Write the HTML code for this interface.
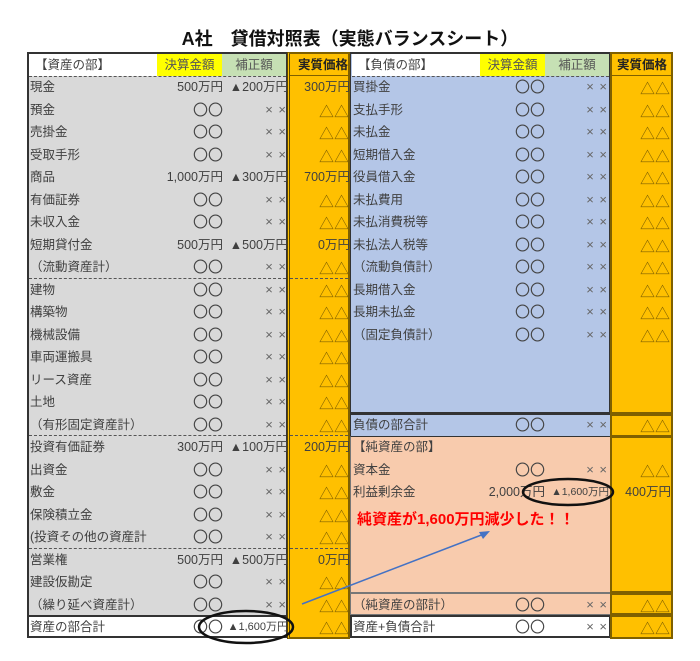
<!DOCTYPE html>
<html><head><meta charset="utf-8">
<style>
*{margin:0;padding:0;box-sizing:border-box}
body{width:700px;height:661px;background:#fff;position:relative;overflow:hidden;font-family:"Liberation Sans","Noto Sans CJK JP",sans-serif;color:#404040;font-size:12.5px}
.a{position:absolute}
.r{position:absolute;height:22px;line-height:22px;display:flex;white-space:nowrap}
.r span{display:block;overflow:visible}
.n{text-align:left;padding-left:2px}
.k,.h,.j{text-align:right}
.L .n{width:129px}.L .k{width:66px}.L .h{width:65px}
.R .n{width:130px}.R .k{width:64px}.R .h{width:64px}
.x{color:#666;font-size:13px;padding-right:2px;word-spacing:2px}
.t{color:#7f6000;font-size:15px;padding-right:1px;position:relative;top:3px}
.o{color:#444;font-size:15px;position:relative;top:1px}
.dash{position:absolute;height:0;border-top:1.5px dashed #555}
</style></head><body>
<div class="a" style="left:0;top:25px;width:700px;text-align:center;font-size:18px;font-weight:bold;color:#111">A社　貸借対照表（実態バランスシート）</div>

<div class="a" style="left:27px;top:52px;width:261px;height:564px;background:#d9d9d9;border:2px solid #333;border-bottom:none"></div>
<div class="a" style="left:29px;top:54px;width:128px;height:22px;background:#fff"></div>
<div class="a" style="left:157px;top:54px;width:65px;height:22px;background:#ffff00"></div>
<div class="a" style="left:222px;top:54px;width:64px;height:22px;background:#c6e0b4"></div>
<div class="a" style="left:27px;top:615px;width:261px;height:23px;background:#fff;border:2px solid #333"></div>
<div class="dash" style="left:29px;top:76px;width:257px"></div>
<div class="dash" style="left:29px;top:278px;width:257px"></div>
<div class="dash" style="left:29px;top:435px;width:257px"></div>
<div class="dash" style="left:29px;top:548px;width:257px"></div>

<div class="a" style="left:287px;top:52px;width:63px;height:587px;background:#ffc000;border:2px solid #7f6000;border-left:3px double #5a4500"></div>
<div class="a" style="left:290px;top:75px;width:58px;height:1px;background:#7f6000"></div>
<div class="dash" style="left:290px;top:278px;width:58px"></div>
<div class="dash" style="left:290px;top:435px;width:58px"></div>
<div class="dash" style="left:290px;top:548px;width:58px"></div>

<div class="a" style="left:350px;top:52px;width:261px;height:362px;background:#b4c6e7;border:2px solid #333;border-left:1px solid #333"></div>
<div class="a" style="left:352px;top:54px;width:128px;height:22px;background:#fff"></div>
<div class="a" style="left:480px;top:54px;width:65px;height:22px;background:#ffff00"></div>
<div class="a" style="left:545px;top:54px;width:64px;height:22px;background:#c6e0b4"></div>
<div class="dash" style="left:352px;top:76px;width:257px"></div>
<div class="a" style="left:350px;top:414px;width:261px;height:23px;background:#b4c6e7;border:1.5px solid #333;border-bottom:none"></div>
<div class="a" style="left:350px;top:436px;width:261px;height:157px;background:#f8cbad;border:1px solid #777;border-top:1px solid #333"></div>
<div class="a" style="left:350px;top:593px;width:261px;height:22px;background:#f8cbad;border:1px solid #777"></div>
<div class="a" style="left:350px;top:615px;width:261px;height:23px;background:#fff;border:2px solid #333"></div>

<div class="a" style="left:610px;top:52px;width:63px;height:362px;background:#ffc000;border:2px solid #7f6000"></div>
<div class="a" style="left:612px;top:75px;width:59px;height:1px;background:#7f6000"></div>
<div class="a" style="left:610px;top:414px;width:63px;height:23px;background:#ffc000;border:2px solid #7f6000"></div>
<div class="a" style="left:610px;top:436px;width:63px;height:157px;background:#ffc000;border:2px solid #7f6000"></div>
<div class="a" style="left:610px;top:593px;width:63px;height:22px;background:#ffc000;border:2px solid #7f6000"></div>
<div class="a" style="left:610px;top:615px;width:63px;height:24px;background:#ffc000;border:2px solid #7f6000"></div>

<div class="r" style="left:29px;top:54px"><span style="width:128px;padding-left:6px">【資産の部】</span><span style="width:65px;text-align:center;color:#555">決算金額</span><span style="width:64px;text-align:center;color:#555">補正額</span><span style="width:8px"></span><span style="width:58px;text-align:center;font-weight:bold;color:#222">実質価格</span></div>
<div class="r" style="left:352px;top:54px"><span style="width:128px;padding-left:6px">【負債の部】</span><span style="width:65px;text-align:center;color:#555">決算金額</span><span style="width:64px;text-align:center;color:#555">補正額</span><span style="width:4px"></span><span style="width:58px;text-align:center;font-weight:bold;color:#222">実質価格</span></div>

<div class="L">
<div class="r" style="left:28px;top:76px"><span class="n">現金</span><span class="k">500万円</span><span class="h">▲200万円</span><span class="j" style="width:62px">300万円</span></div>
<div class="r" style="left:28px;top:98.5px"><span class="n">預金</span><span class="k o">〇〇</span><span class="h x">× ×</span><span class="j t" style="width:62px">△△</span></div>
<div class="r" style="left:28px;top:121px"><span class="n">売掛金</span><span class="k o">〇〇</span><span class="h x">× ×</span><span class="j t" style="width:62px">△△</span></div>
<div class="r" style="left:28px;top:143.5px"><span class="n">受取手形</span><span class="k o">〇〇</span><span class="h x">× ×</span><span class="j t" style="width:62px">△△</span></div>
<div class="r" style="left:28px;top:166px"><span class="n">商品</span><span class="k">1,000万円</span><span class="h">▲300万円</span><span class="j" style="width:62px">700万円</span></div>
<div class="r" style="left:28px;top:188.5px"><span class="n">有価証券</span><span class="k o">〇〇</span><span class="h x">× ×</span><span class="j t" style="width:62px">△△</span></div>
<div class="r" style="left:28px;top:211px"><span class="n">未収入金</span><span class="k o">〇〇</span><span class="h x">× ×</span><span class="j t" style="width:62px">△△</span></div>
<div class="r" style="left:28px;top:233.5px"><span class="n">短期貸付金</span><span class="k">500万円</span><span class="h">▲500万円</span><span class="j" style="width:62px">0万円</span></div>
<div class="r" style="left:28px;top:256px"><span class="n">（流動資産計）</span><span class="k o">〇〇</span><span class="h x">× ×</span><span class="j t" style="width:62px">△△</span></div>
<div class="r" style="left:28px;top:278.5px"><span class="n">建物</span><span class="k o">〇〇</span><span class="h x">× ×</span><span class="j t" style="width:62px">△△</span></div>
<div class="r" style="left:28px;top:301px"><span class="n">構築物</span><span class="k o">〇〇</span><span class="h x">× ×</span><span class="j t" style="width:62px">△△</span></div>
<div class="r" style="left:28px;top:323.5px"><span class="n">機械設備</span><span class="k o">〇〇</span><span class="h x">× ×</span><span class="j t" style="width:62px">△△</span></div>
<div class="r" style="left:28px;top:346px"><span class="n">車両運搬具</span><span class="k o">〇〇</span><span class="h x">× ×</span><span class="j t" style="width:62px">△△</span></div>
<div class="r" style="left:28px;top:368.5px"><span class="n">リース資産</span><span class="k o">〇〇</span><span class="h x">× ×</span><span class="j t" style="width:62px">△△</span></div>
<div class="r" style="left:28px;top:391px"><span class="n">土地</span><span class="k o">〇〇</span><span class="h x">× ×</span><span class="j t" style="width:62px">△△</span></div>
<div class="r" style="left:28px;top:413.5px"><span class="n">（有形固定資産計）</span><span class="k o">〇〇</span><span class="h x">× ×</span><span class="j t" style="width:62px">△△</span></div>
<div class="r" style="left:28px;top:436px"><span class="n">投資有価証券</span><span class="k">300万円</span><span class="h">▲100万円</span><span class="j" style="width:62px">200万円</span></div>
<div class="r" style="left:28px;top:458.5px"><span class="n">出資金</span><span class="k o">〇〇</span><span class="h x">× ×</span><span class="j t" style="width:62px">△△</span></div>
<div class="r" style="left:28px;top:481px"><span class="n">敷金</span><span class="k o">〇〇</span><span class="h x">× ×</span><span class="j t" style="width:62px">△△</span></div>
<div class="r" style="left:28px;top:503.5px"><span class="n">保険積立金</span><span class="k o">〇〇</span><span class="h x">× ×</span><span class="j t" style="width:62px">△△</span></div>
<div class="r" style="left:28px;top:526px"><span class="n">(投資その他の資産計</span><span class="k o">〇〇</span><span class="h x">× ×</span><span class="j t" style="width:62px">△△</span></div>
<div class="r" style="left:28px;top:548.5px"><span class="n">営業権</span><span class="k">500万円</span><span class="h">▲500万円</span><span class="j" style="width:62px">0万円</span></div>
<div class="r" style="left:28px;top:571px"><span class="n">建設仮勘定</span><span class="k o">〇〇</span><span class="h x">× ×</span><span class="j t" style="width:62px">△△</span></div>
<div class="r" style="left:28px;top:593.5px"><span class="n">（繰り延べ資産計）</span><span class="k o">〇〇</span><span class="h x">× ×</span><span class="j t" style="width:62px">△△</span></div>
<div class="r" style="left:28px;top:616px"><span class="n">資産の部合計</span><span class="k o">〇〇</span><span class="h" style="font-size:11px">▲1,600万円</span><span class="j t" style="width:62px">△△</span></div>
</div>

<div class="R">
<div class="r" style="left:351px;top:76px"><span class="n">買掛金</span><span class="k o">〇〇</span><span class="h x">× ×</span><span class="j t" style="width:62px">△△</span></div>
<div class="r" style="left:351px;top:98.5px"><span class="n">支払手形</span><span class="k o">〇〇</span><span class="h x">× ×</span><span class="j t" style="width:62px">△△</span></div>
<div class="r" style="left:351px;top:121px"><span class="n">未払金</span><span class="k o">〇〇</span><span class="h x">× ×</span><span class="j t" style="width:62px">△△</span></div>
<div class="r" style="left:351px;top:143.5px"><span class="n">短期借入金</span><span class="k o">〇〇</span><span class="h x">× ×</span><span class="j t" style="width:62px">△△</span></div>
<div class="r" style="left:351px;top:166px"><span class="n">役員借入金</span><span class="k o">〇〇</span><span class="h x">× ×</span><span class="j t" style="width:62px">△△</span></div>
<div class="r" style="left:351px;top:188.5px"><span class="n">未払費用</span><span class="k o">〇〇</span><span class="h x">× ×</span><span class="j t" style="width:62px">△△</span></div>
<div class="r" style="left:351px;top:211px"><span class="n">未払消費税等</span><span class="k o">〇〇</span><span class="h x">× ×</span><span class="j t" style="width:62px">△△</span></div>
<div class="r" style="left:351px;top:233.5px"><span class="n">未払法人税等</span><span class="k o">〇〇</span><span class="h x">× ×</span><span class="j t" style="width:62px">△△</span></div>
<div class="r" style="left:351px;top:256px"><span class="n">（流動負債計）</span><span class="k o">〇〇</span><span class="h x">× ×</span><span class="j t" style="width:62px">△△</span></div>
<div class="r" style="left:351px;top:278.5px"><span class="n">長期借入金</span><span class="k o">〇〇</span><span class="h x">× ×</span><span class="j t" style="width:62px">△△</span></div>
<div class="r" style="left:351px;top:301px"><span class="n">長期未払金</span><span class="k o">〇〇</span><span class="h x">× ×</span><span class="j t" style="width:62px">△△</span></div>
<div class="r" style="left:351px;top:323.5px"><span class="n">（固定負債計）</span><span class="k o">〇〇</span><span class="h x">× ×</span><span class="j t" style="width:62px">△△</span></div>
<div class="r" style="left:351px;top:414px"><span class="n">負債の部合計</span><span class="k o">〇〇</span><span class="h x">× ×</span><span class="j t" style="width:62px">△△</span></div>
<div class="r" style="left:351px;top:436px"><span class="n">【純資産の部】</span></div>
<div class="r" style="left:351px;top:458.5px"><span class="n">資本金</span><span class="k o">〇〇</span><span class="h x">× ×</span><span class="j t" style="width:62px">△△</span></div>
<div class="r" style="left:351px;top:481px"><span class="n">利益剰余金</span><span class="k">2,000万円</span><span class="h" style="font-size:10.5px">▲1,600万円</span><span class="j" style="width:62px">400万円</span></div>
<div class="r" style="left:351px;top:593.5px"><span class="n">（純資産の部計）</span><span class="k o">〇〇</span><span class="h x">× ×</span><span class="j t" style="width:62px">△△</span></div>
<div class="r" style="left:351px;top:616px"><span class="n">資産+負債合計</span><span class="k o">〇〇</span><span class="h x">× ×</span><span class="j t" style="width:62px">△△</span></div>
</div>

<div class="a" style="left:357px;top:508px;font-size:15px;font-weight:bold;color:#ff0000">純資産が1,600万円減少した！！</div>

<svg class="a" style="left:0;top:0" width="700" height="661">
<ellipse cx="568" cy="492" rx="45" ry="13" fill="none" stroke="#111" stroke-width="2.5"/>
<ellipse cx="246" cy="627" rx="47" ry="16" fill="none" stroke="#111" stroke-width="2.5"/>
<line x1="302" y1="604" x2="484" y2="534" stroke="#4472c4" stroke-width="1.5"/>
<polygon points="490,531 479,532 483,539" fill="#4472c4"/>
</svg>
</body></html>
